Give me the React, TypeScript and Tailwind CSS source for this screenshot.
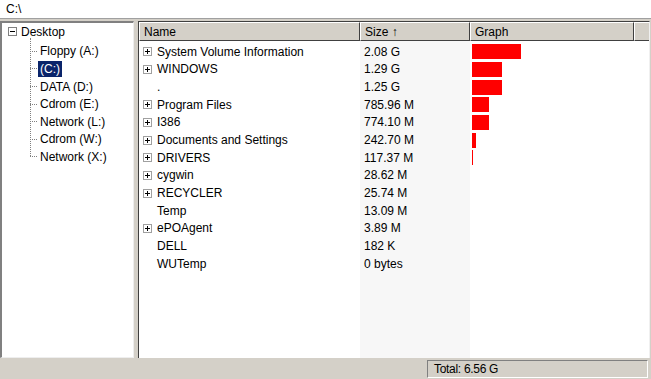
import React from 'react';

const rows = [
  { name: 'System Volume Information', size: '2.08 G', bar: 49, plus: true },
  { name: 'WINDOWS', size: '1.29 G', bar: 30, plus: true },
  { name: '.', size: '1.25 G', bar: 30, plus: false },
  { name: 'Program Files', size: '785.96 M', bar: 17, plus: true },
  { name: 'I386', size: '774.10 M', bar: 17, plus: true },
  { name: 'Documents and Settings', size: '242.70 M', bar: 4, plus: true },
  { name: 'DRIVERS', size: '117.37 M', bar: 1, plus: true },
  { name: 'cygwin', size: '28.62 M', bar: 0, plus: true },
  { name: 'RECYCLER', size: '25.74 M', bar: 0, plus: true },
  { name: 'Temp', size: '13.09 M', bar: 0, plus: false },
  { name: 'ePOAgent', size: '3.89 M', bar: 0, plus: true },
  { name: 'DELL', size: '182 K', bar: 0, plus: false },
  { name: 'WUTemp', size: '0 bytes', bar: 0, plus: false },
];

const drives = ['Floppy (A:)', '(C:)', 'DATA (D:)', 'Cdrom (E:)', 'Network (L:)', 'Cdrom (W:)', 'Network (X:)'];

const Plus = () => (
  <span className="w-[9px] h-[9px] border border-[#a0a0a0] bg-white flex items-center justify-center relative shrink-0">
    <span className="absolute w-[5px] h-px bg-black" />
    <span className="absolute w-px h-[5px] bg-black" />
  </span>
);

export default function App() {
  return (
    <div className="w-[651px] h-[379px] bg-[#d4d0c8] flex flex-col text-[12px] text-black overflow-hidden" style={{ fontFamily: '"Liberation Sans", Arial, sans-serif' }}>
      {/* address bar */}
      <div className="h-[19px] bg-white border-b border-[#a0a0a0] pl-[6px] flex items-center shrink-0">C:\</div>

      <div className="flex flex-1 min-h-0 pt-[2px]">
        {/* tree */}
        <div className="w-[134px] bg-white border-t-2 border-l-2 border-[#808080] border-r border-b border-r-[#eeeeee] border-b-[#eeeeee] relative shrink-0">
          <div className="flex items-center h-[17.6px] pl-[6px]">
            <span className="w-[9px] h-[9px] border border-[#808080] bg-white flex items-center justify-center relative shrink-0">
              <span className="absolute w-[5px] h-px bg-black" />
            </span>
            <span className="ml-[4px]">Desktop</span>
          </div>
          <div className="h-[2px]" />
          <div className="absolute left-[28px] top-[15px] h-[118px] border-l border-dotted border-[#808080]" />
          {drives.map((d, i) => (
            <div key={d} className="flex items-center h-[17.6px] pl-[28px]">
              <span className="w-[7px] border-t border-dotted border-[#808080] shrink-0" />
              <span className={i === 1 ? 'ml-px px-[2px] bg-[#0a246a] text-white leading-[16px]' : 'ml-[3px]'}>{d}</span>
            </div>
          ))}
        </div>

        <div className="w-[4px] shrink-0" />

        {/* list */}
        <div className="flex-1 bg-white border-t border-l border-[#404040] border-r border-r-[#f0f0f0] relative flex flex-col min-w-0 mr-px">
          <div className="absolute left-[221px] w-[110px] top-[19px] bottom-0 bg-[#f7f7f7]" />
          <div className="flex h-[19px] shrink-0 relative">
            <div className="w-[221px] bg-[#d4d0c8] border-t border-l border-white border-r border-b border-r-[#404040] border-b-[#404040] pl-[4px] flex items-center">Name</div>
            <div className="w-[110px] bg-[#d4d0c8] border-t border-l border-white border-r border-b border-r-[#404040] border-b-[#404040] pl-[4px] flex items-center">Size ↑</div>
            <div className="w-[164px] bg-[#d4d0c8] border-t border-l border-white border-r border-b border-r-[#404040] border-b-[#404040] pl-[4px] flex items-center">Graph</div>
            <div className="flex-1 bg-[#d4d0c8] border-t border-l border-white border-b border-b-[#404040]" />
          </div>
          <div className="relative pt-[2px]">
            {rows.map((r) => (
              <div key={r.name} className="flex items-center h-[17.67px]">
                <div className="w-[221px] flex items-center pl-[4px]">
                  {r.plus ? <Plus /> : <span className="w-[9px] shrink-0" />}
                  <span className="ml-[5px]">{r.name}</span>
                </div>
                <div className="w-[110px] pl-[4px]">{r.size}</div>
                <div className="w-[164px] pl-[2px] flex items-center">
                  {r.bar > 0 && <div className="h-[15px] bg-[#ff0000]" style={{ width: r.bar }} />}
                </div>
              </div>
            ))}
          </div>
        </div>
      </div>

      {/* status bar */}
      <div className="h-[21px] flex shrink-0 pt-[2px] pb-[1px]">
        <div className="flex-1" />
        <div className="w-[221px] mr-[3px] border-t border-l border-[#808080] border-r border-b border-r-white border-b-white pl-[6px] flex items-center text-[12px] tracking-[-0.3px]">Total: 6.56 G</div>
      </div>
    </div>
  );
}
